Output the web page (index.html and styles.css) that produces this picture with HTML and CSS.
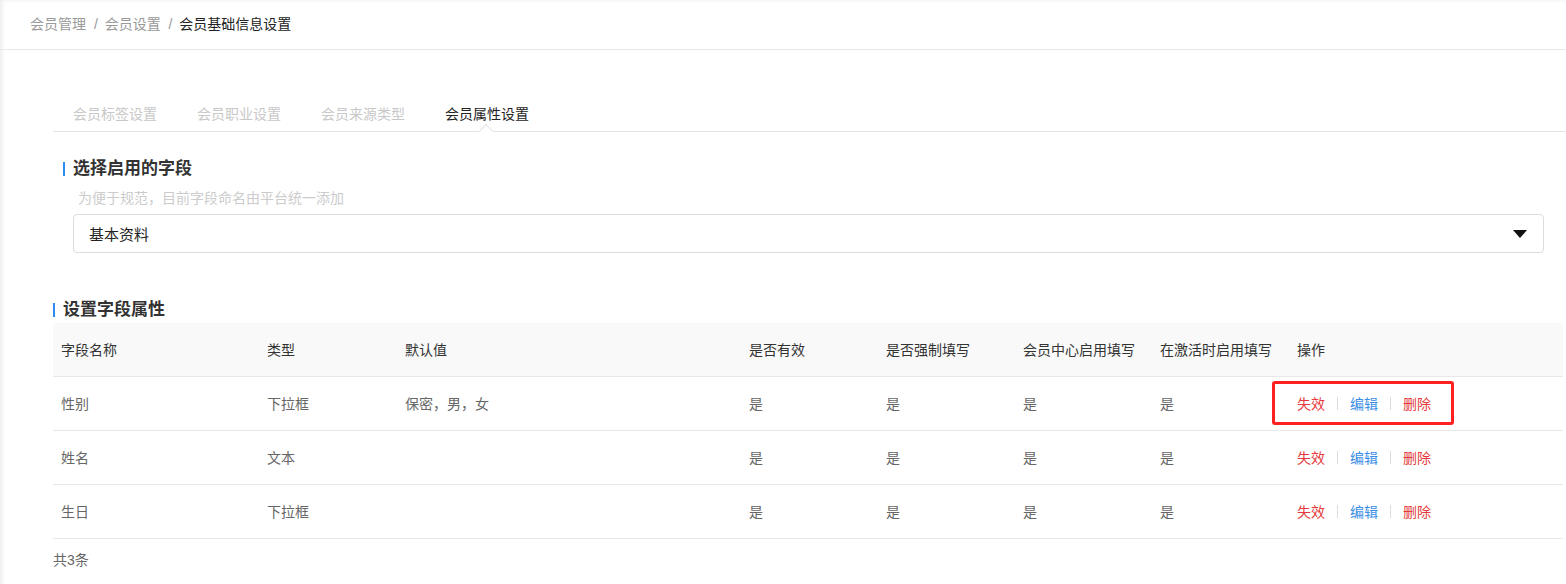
FILE: index.html
```html
<!DOCTYPE html>
<html lang="zh-CN">
<head>
  <meta charset="UTF-8">
  <title>会员基础信息设置</title>
  <link rel="stylesheet" href="styles.css">
</head>
<body>
  <div class="page">
    <!-- 面包屑 -->
    <div class="breadcrumb">
      <span class="crumb">会员管理</span>
      <span class="sep">/</span>
      <span class="crumb">会员设置</span>
      <span class="sep">/</span>
      <span class="crumb current">会员基础信息设置</span>
    </div>

    <div class="content">
      <!-- 标签页 -->
      <div class="tabs">
        <span class="tab">会员标签设置</span>
        <span class="tab">会员职业设置</span>
        <span class="tab">会员来源类型</span>
        <span class="tab active">会员属性设置</span>
      </div>

      <!-- 选择字段 -->
      <div class="block">
        <h3 class="title">选择启用的字段</h3>
        <p class="hint">为便于规范，目前字段命名由平台统一添加</p>
        <div class="select">
          <span>基本资料</span>
          <span class="arrow"></span>
        </div>
      </div>

      <!-- 字段属性 -->
      <h3 class="title title-2">设置字段属性</h3>
      <table class="grid">
        <thead>
          <tr>
            <th class="c1">字段名称</th>
            <th class="c2">类型</th>
            <th class="c3">默认值</th>
            <th class="c4">是否有效</th>
            <th class="c4">是否强制填写</th>
            <th class="c4">会员中心启用填写</th>
            <th class="c4">在激活时启用填写</th>
            <th>操作</th>
          </tr>
        </thead>
        <tbody>
          <tr>
            <td>性别</td>
            <td>下拉框</td>
            <td>保密，男，女</td>
            <td>是</td>
            <td>是</td>
            <td>是</td>
            <td>是</td>
            <td class="ops">
              <span class="mark"></span>
              <a class="red">失效</a><i></i><a class="blue">编辑</a><i></i><a class="red">删除</a>
            </td>
          </tr>
          <tr>
            <td>姓名</td>
            <td>文本</td>
            <td></td>
            <td>是</td>
            <td>是</td>
            <td>是</td>
            <td>是</td>
            <td class="ops"><a class="red">失效</a><i></i><a class="blue">编辑</a><i></i><a class="red">删除</a></td>
          </tr>
          <tr>
            <td>生日</td>
            <td>下拉框</td>
            <td></td>
            <td>是</td>
            <td>是</td>
            <td>是</td>
            <td>是</td>
            <td class="ops"><a class="red">失效</a><i></i><a class="blue">编辑</a><i></i><a class="red">删除</a></td>
          </tr>
        </tbody>
      </table>
      <p class="total">共3条</p>
    </div>
  </div>
</body>
</html>
```

FILE: styles.css
```css
/* 基础 */
* {
  margin: 0;
  padding: 0;
  box-sizing: border-box;
}

body {
  background: #fff;
  color: #333;
  font-family: "Liberation Sans", "Noto Sans CJK SC", sans-serif;
  font-size: 14px;
}

.page {
  height: 584px;
  box-shadow: inset 4px 2px 4px -2px rgba(0, 0, 0, 0.08);
}

/* 面包屑 */
.breadcrumb {
  height: 50px;
  padding: 15px 0 0 30px;
  border-bottom: 1px solid #e8e8e8;
  line-height: 18px;
}

.crumb {
  color: #999;
}

.crumb.current {
  color: #222;
}

.sep {
  color: #999;
  margin: 0 3px 0 4px;
}

/* 主体 */
.content {
  padding: 52px 0 0 53px;
}

.tabs {
  display: flex;
  gap: 40px;
  padding-left: 20px;
  height: 30px;
  border-bottom: 1px solid #e4e4e4;
  position: relative;
}

.tab {
  color: #c8c8c8;
  line-height: 24px;
}

.tab.active {
  color: #222;
  position: relative;
}

/* 当前标签下的小三角 */
.tab.active::after {
  content: "";
  position: absolute;
  left: 36px;
  top: 24px;
  width: 9px;
  height: 9px;
  background: #fff;
  border-left: 1px solid #e4e4e4;
  border-top: 1px solid #e4e4e4;
  transform: rotate(45deg);
}

.block {
  padding-left: 10px;
}

.title {
  font-size: 17px;
  font-weight: bold;
  color: #333;
  line-height: 20px;
  padding-left: 10px;
  position: relative;
}

.title::before {
  content: "";
  position: absolute;
  left: 0;
  top: 3px;
  width: 2px;
  height: 14px;
  background: #2d8cf0;
}

.block .title {
  margin-top: 27px;
}

.hint {
  color: #ccc;
  font-size: 14px;
  margin: 10px 0 0 15px;
  line-height: 18px;
}

.select {
  margin: 7px 22px 0 10px;
  height: 39px;
  border: 1px solid #dcdcdc;
  border-radius: 4px;
  display: flex;
  align-items: center;
  justify-content: space-between;
  padding: 0 16px 0 15px;
  font-size: 15px;
  color: #222;
}

.arrow {
  width: 0;
  height: 0;
  border-left: 7px solid transparent;
  border-right: 7px solid transparent;
  border-top: 8px solid #111;
}

.title-2 {
  margin-top: 47px;
}

/* 表格 */
.grid {
  margin-top: 3px;
  width: 1510px;
  border-collapse: collapse;
  table-layout: fixed;
}

.grid th,
.grid td {
  text-align: left;
  padding: 0 8px;
  height: 54px;
  font-weight: normal;
  border-bottom: 1px solid #e8e8e8;
}

.grid th {
  background: #f9f9f9;
  color: #333;
  height: 53px;
}

.grid td {
  color: #666;
}

.c1 { width: 206px; }
.c2 { width: 138px; }
.c3 { width: 344px; }
.c4 { width: 137px; }

.ops {
  position: relative;
}

.ops a {
  cursor: pointer;
}

.ops .red {
  color: #e4393c;
}

.ops .blue {
  color: #3a8ee6;
}

.ops i {
  display: inline-block;
  width: 1px;
  height: 13px;
  background: #ddd;
  margin: 0 12px;
  vertical-align: -1px;
}

/* 标注框 */
.mark {
  position: absolute;
  left: -17px;
  top: 4px;
  width: 182px;
  height: 44px;
  border: 3px solid #ff2020;
  border-radius: 3px;
}

.total {
  color: #666;
  margin-top: 12px;
  line-height: 18px;
}
```
